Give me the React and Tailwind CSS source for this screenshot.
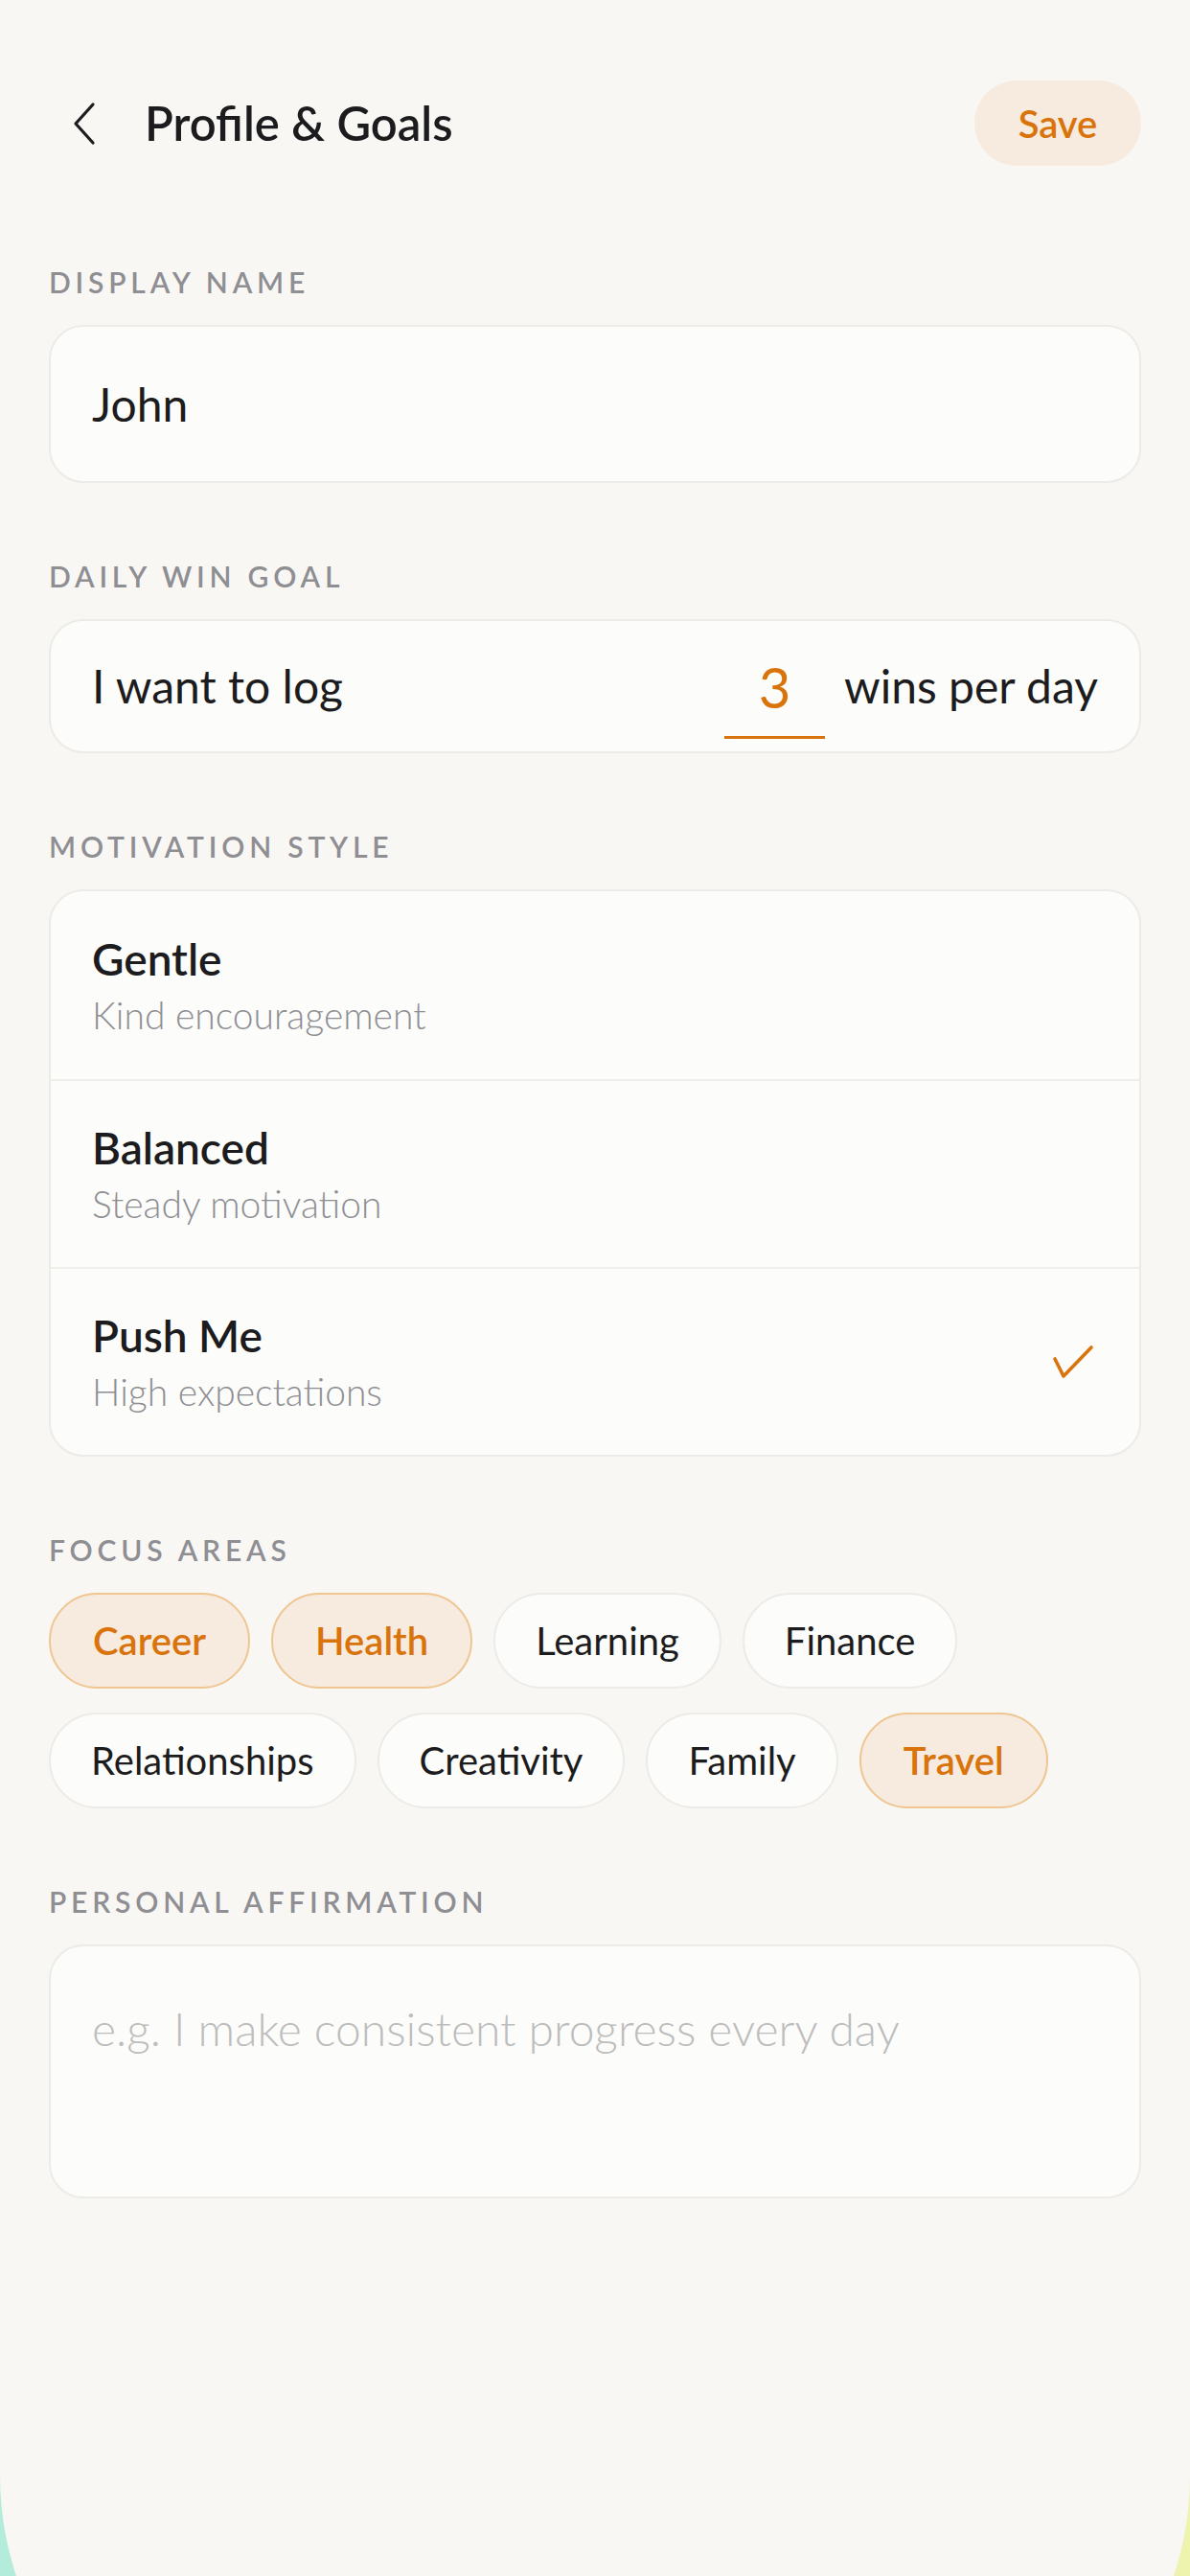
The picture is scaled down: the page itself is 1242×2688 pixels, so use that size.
import React from 'react';

const motivationOptions = [
  { title: 'Gentle', subtitle: 'Kind encouragement' },
  { title: 'Balanced', subtitle: 'Steady motivation' },
  { title: 'Push Me', subtitle: 'High expectations' },
];

const focusAreas = [
  { name: 'Career', on: true },
  { name: 'Health', on: true },
  { name: 'Learning', on: false },
  { name: 'Finance', on: false },
  { name: 'Relationships', on: false },
  { name: 'Creativity', on: false },
  { name: 'Family', on: false },
  { name: 'Travel', on: true },
];

const SectionLabel = ({ children }) => (
  <div className="text-[30px] leading-[30px] font-semibold tracking-[0.16em] text-[#8e8e93]">
    {children}
  </div>
);

const App = () => {
  const selected = 'Push Me';

  return (
    <div className="h-[2688px] overflow-hidden bg-linear-to-r from-[#b3ecdb] to-[#eef3ae] font-[Lato,'Noto_Sans',sans-serif] text-[#1c1c1e]">
      <div className="min-h-[2916px] rounded-b-[333px] bg-[#f8f7f4] px-[51px] pt-[84px]">
        {/* Header */}
        <div className="flex h-[89px] items-center justify-between">
          <div className="flex items-center">
            <svg width="30" height="46" viewBox="0 0 30 46" className="ml-[22px]" fill="none">
              <path d="M24 3 L6 23 L24 43" stroke="#1c1c1e" strokeWidth="3.2" strokeLinecap="round" strokeLinejoin="round" />
            </svg>
            <h1 className="ml-[48px] text-[49px] font-semibold leading-none">Profile &amp; Goals</h1>
          </div>
          <button className="flex h-[89px] w-[174px] items-center justify-center rounded-full bg-[#f7eadf] text-[40px] font-semibold text-[#d9730b]">
            Save
          </button>
        </div>

        {/* Display name */}
        <div className="mt-[106px]">
          <SectionLabel>DISPLAY NAME</SectionLabel>
          <div className="mt-[30px] flex h-[165px] items-center rounded-[36px] border-2 border-[#ecebe7] bg-[#fcfcfa] px-[43px] text-[48px] font-normal">
            John
          </div>
        </div>

        {/* Daily win goal */}
        <div className="mt-[82px]">
          <SectionLabel>DAILY WIN GOAL</SectionLabel>
          <div className="mt-[30px] flex h-[140px] items-center rounded-[36px] border-2 border-[#ecebe7] bg-[#fcfcfa] px-[43px] text-[48px] font-normal">
            <span className="flex-1">I want to log</span>
            <div className="flex h-[110px] w-[105px] items-center justify-center border-b-[3px] border-[#d9730b] pt-[4px] text-[58px] font-normal text-[#d9730b]">
              3
            </div>
            <span className="ml-[20px]">wins per day</span>
          </div>
        </div>

        {/* Motivation style */}
        <div className="mt-[82px]">
          <SectionLabel>MOTIVATION STYLE</SectionLabel>
          <div className="mt-[30px] overflow-hidden rounded-[36px] border-2 border-[#ecebe7] bg-[#fcfcfa]">
            {motivationOptions.map((opt, i) => (
              <div
                key={opt.title}
                className={`flex h-[196px] items-center justify-between px-[43px] ${i > 0 ? 'border-t-2 border-[#efeeeb]' : ''}`}
              >
                <div className="flex flex-col">
                  <div className="text-[46px] font-semibold leading-[54px]">{opt.title}</div>
                  <div className="mt-[8px] text-[39px] font-light leading-[46px] text-[#8e8e93]">{opt.subtitle}</div>
                </div>
                {opt.title === selected && (
                  <svg width="44" height="36" viewBox="0 0 44 36" fill="none" className="mr-[4px]">
                    <path d="M3 15 L12 33 L41 3" stroke="#d9730b" strokeWidth="3.6" strokeLinecap="round" strokeLinejoin="round" />
                  </svg>
                )}
              </div>
            ))}
          </div>
        </div>

        {/* Focus areas */}
        <div className="mt-[82px]">
          <SectionLabel>FOCUS AREAS</SectionLabel>
          <div className="mt-[30px] flex flex-wrap gap-x-[22px] gap-y-[25px]">
            {focusAreas.map((area) => (
              <div
                key={area.name}
                className={`flex h-[100px] items-center rounded-full border-2 text-[40px] ${
                  area.on
                    ? 'border-[#efc592] bg-[#f7eadf] px-[44px] font-semibold text-[#d9730b]'
                    : 'border-[#ecebe7] bg-[#fcfcfa] px-[42px] font-normal'
                }`}
              >
                {area.name}
              </div>
            ))}
          </div>
        </div>

        {/* Personal affirmation */}
        <div className="mt-[82px]">
          <SectionLabel>PERSONAL AFFIRMATION</SectionLabel>
          <div className="mt-[30px] h-[265px] rounded-[36px] border-2 border-[#ecebe7] bg-[#fcfcfa] px-[43px] pt-[58px] text-[48px] font-light leading-[56px] text-[#bdbdbd]">
            e.g. I make consistent progress every day
          </div>
        </div>
      </div>
    </div>
  );
};

export default App;
